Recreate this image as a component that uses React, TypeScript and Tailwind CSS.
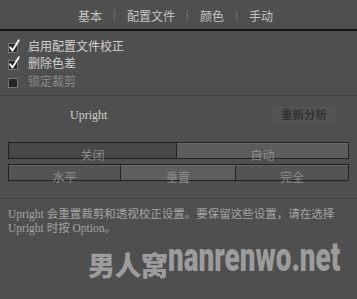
import React from "react";

const cjk = { fontFamily: '"Noto Sans CJK SC", "Noto Sans", sans-serif' };
const serif = { fontFamily: '"Liberation Serif", "Noto Sans CJK SC", serif' };

function Check({ checked }: { checked: boolean }) {
  return (
    <svg width="14" height="14" viewBox="0 0 14 14" className="shrink-0">
      <rect x="0.5" y="4.5" width="9" height="9" fill="#262626" stroke="#767676" />
      {checked && (
        <path d="M2.2 8.3 L4.5 11.6 L10.8 1.2" fill="none" stroke="#f4f4f4" strokeWidth="1.9" strokeLinecap="round" strokeLinejoin="round" />
      )}
    </svg>
  );
}

function Sep() {
  return <div className="w-px h-[11px] bg-[#6a6a6a] mx-[12px]" />;
}

export default function App() {
  return (
    <div className="w-[357px] h-[299px] bg-[#4f4f4f] overflow-hidden relative" style={cjk}>
      {/* tabs */}
      <div className="h-[29px] flex items-center justify-center pr-[6px] text-[12px] text-[#c4c4c4] pt-[2px]">
        <span>基本</span>
        <Sep />
        <span>配置文件</span>
        <Sep />
        <span>颜色</span>
        <Sep />
        <span>手动</span>
      </div>
      <div className="h-[2px] bg-[#141414]" />

      {/* checkboxes */}
      <div className="pt-[6px] pl-[8px] flex flex-col text-[12px] h-[65px] border-b border-[#404040]">
        <div className="flex items-center h-[17.5px] gap-[6px] text-[#d2d2d2]">
          <Check checked />
          <span className="leading-none">启用配置文件校正</span>
        </div>
        <div className="flex items-center h-[17.5px] gap-[6px] text-[#d2d2d2]">
          <Check checked />
          <span className="leading-none">删除色差</span>
        </div>
        <div className="flex items-center h-[17.5px] gap-[6px] text-[#8a8a8a]">
          <Check checked={false} />
          <span className="leading-none">锁定裁剪</span>
        </div>
      </div>

      {/* upright row */}
      <div className="flex items-center justify-between h-[26px] mt-[6px] pl-[70px] pr-[21px]">
        <span className="text-[12px] text-[#cfcfcf]" style={serif}>Upright</span>
        <div className="h-[18px] w-[64px] bg-[#535353] flex items-center justify-center text-[11.5px] text-[#333] font-bold">
          重新分析
        </div>
      </div>

      {/* segmented rows */}
      <div className="px-[8px] mt-[14px] flex flex-col gap-[5px]">
        <div className="flex h-[17px] border border-[#222] text-[12px]">
          <div className="w-[168px] bg-[#484848] border-r border-[#222] flex justify-center items-end leading-none text-[#8c8c8c]">
            <span className="translate-y-[3px]">关闭</span>
          </div>
          <div className="flex-1 bg-[#5c5c5c] border-t border-[#6a6a6a] flex justify-center items-end leading-none text-[#8c8c8c]">
            <span className="translate-y-[3px]">自动</span>
          </div>
        </div>
        <div className="flex h-[17px] border border-[#222] text-[12px] text-[#8c8c8c]">
          <div className="w-[112px] bg-[#545454] border-t border-[#656565] border-r border-r-[#222] flex justify-center items-end leading-none">
            <span className="translate-y-[3px]">水平</span>
          </div>
          <div className="w-[115px] bg-[#5e5e5e] border-t border-[#6c6c6c] border-r border-r-[#222] flex justify-center items-end leading-none">
            <span className="translate-y-[3px]">垂直</span>
          </div>
          <div className="flex-1 bg-[#545454] border-t border-[#656565] flex justify-center items-end leading-none">
            <span className="translate-y-[3px]">完全</span>
          </div>
        </div>
      </div>

      <div className="h-px bg-[#434343] mt-[17px]" />

      {/* description */}
      <div className="px-[8px] pt-[8px] text-[11.5px] leading-[14px] text-[#a4a4a4]" style={serif}>
        <div className="whitespace-nowrap">Upright 会重置裁剪和透视校正设置。要保留这些设置，请在选择</div>
        <div className="whitespace-nowrap">Upright 时按 Option。</div>
      </div>

      {/* watermark */}
      <div className="flex items-end pl-[88px] mt-[2px] text-[#9c9c9c] leading-none whitespace-nowrap">
        <span className="text-[27px] font-black tracking-[-0.5px]" style={cjk}>男人窝</span>
        <span
          className="text-[41px] font-black origin-left scale-x-[0.68] inline-block"
          style={{ fontFamily: '"Roboto", "Liberation Sans", sans-serif' }}
        >
          nanrenwo.net
        </span>
      </div>
    </div>
  );
}
